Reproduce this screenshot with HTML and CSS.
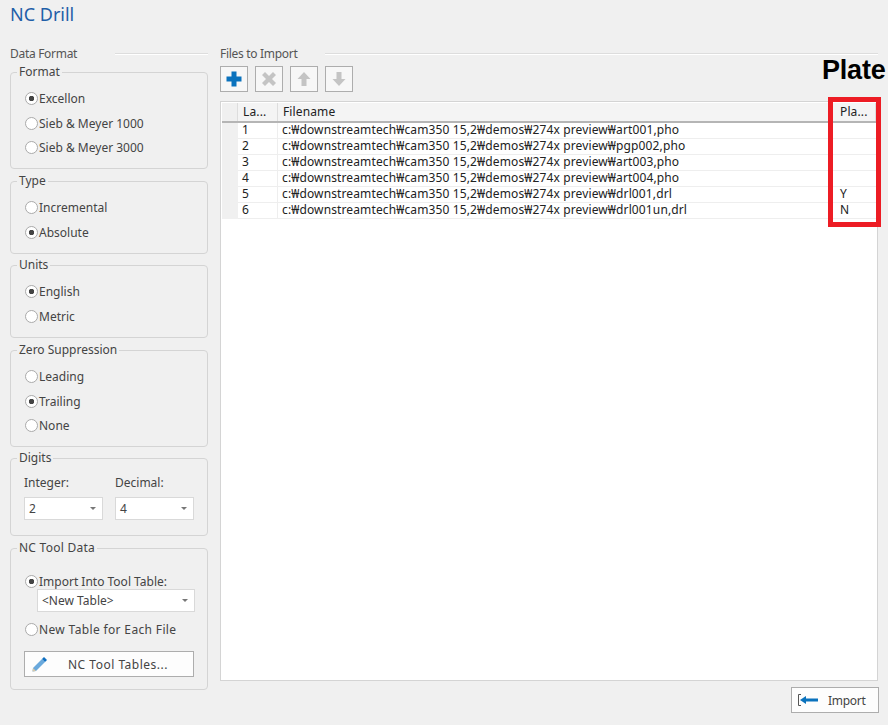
FILE: index.html
```html
<!DOCTYPE html>
<html lang="ko">
<head>
    <meta charset="UTF-8">
    <title>NC Drill</title>
    <link rel="stylesheet" href="styles.css">
</head>
<body>
    <div class="dialog">
        <h1>NC Drill</h1>

        <div class="main">
            <div class="left">
                <div class="section-title section-format"><span>Data Format</span><i></i></div>

                <div class="group group-three">
                    <span class="legend">Format</span>
                    <label class="radio on">Excellon</label>
                    <label class="radio">Sieb &amp; Meyer 1000</label>
                    <label class="radio">Sieb &amp; Meyer 3000</label>
                </div>

                <div class="group group-two group-tight">
                    <span class="legend">Type</span>
                    <label class="radio">Incremental</label>
                    <label class="radio on">Absolute</label>
                </div>

                <div class="group group-two">
                    <span class="legend">Units</span>
                    <label class="radio on">English</label>
                    <label class="radio">Metric</label>
                </div>

                <div class="group group-three group-tight">
                    <span class="legend">Zero Suppression</span>
                    <label class="radio">Leading</label>
                    <label class="radio on">Trailing</label>
                    <label class="radio">None</label>
                </div>

                <div class="group group-digits">
                    <span class="legend">Digits</span>
                    <div class="digits">
                        <div class="digit">
                            <div class="digit-label">Integer:</div>
                            <div class="combo">2<b></b></div>
                        </div>
                        <div class="digit">
                            <div class="digit-label">Decimal:</div>
                            <div class="combo">4<b></b></div>
                        </div>
                    </div>
                </div>

                <div class="group group-tool">
                    <span class="legend legend-wide">NC Tool Data</span>
                    <label class="radio radio-import on">Import Into Tool Table:</label>
                    <div class="combo combo-table">&lt;New Table&gt;<b></b></div>
                    <label class="radio radio-new">New Table for Each File</label>
                    <button class="btn btn-tables">
                        <svg width="18" height="18" viewBox="0 0 18 18">
                            <path d="M2 13 L11 4 L14 7 L5 16 L1.5 16.5 Z" fill="#6aa9dc"/>
                            <path d="M11 4 L13 2 L16 5 L14 7 Z" fill="#0f6fc0"/>
                            <path d="M2 13 L5 16 L1.5 16.5 Z" fill="#d8c8a8"/>
                        </svg>
                        <span>NC Tool Tables...</span>
                    </button>
                </div>
            </div>

            <div class="right">
                <div class="section-title section-files"><span>Files to Import</span><i></i></div>

                <div class="toolbar">
                    <button class="tool">
                        <svg width="16" height="16" viewBox="0 0 16 16"><path d="M5.500 0.500h5v5h5v5h-5v5h-5v-5h-5v-5h5z" fill="#0a72bd"/></svg>
                    </button>
                    <button class="tool">
                        <svg width="16" height="16" viewBox="0 0 16 16"><path d="M1 4l3-3 4 4 4-4 3 3-4 4 4 4-3 3-4-4-4 4-3-3 4-4z" fill="#c4c4c4"/></svg>
                    </button>
                    <button class="tool">
                        <svg width="16" height="16" viewBox="0 0 16 16"><path d="M8 1l6.500 7h-4v7h-5v-7h-4z" fill="#c4c4c4"/></svg>
                    </button>
                    <button class="tool">
                        <svg width="16" height="16" viewBox="0 0 16 16"><path d="M8 15l6.500-7h-4v-7h-5v7h-4z" fill="#c4c4c4"/></svg>
                    </button>
                </div>

                <div class="grid">
                    <div class="row head">
                        <div class="cell mark"></div>
                        <div class="cell layer">La...</div>
                        <div class="cell name">Filename</div>
                        <div class="cell plate">Pla...</div>
                    </div>
                    <div class="row">
                        <div class="cell mark"></div>
                        <div class="cell layer">1</div>
                        <div class="cell name">c:₩downstreamtech₩cam350 15,2₩demos₩274x preview₩art001,pho</div>
                        <div class="cell plate"></div>
                    </div>
                    <div class="row">
                        <div class="cell mark"></div>
                        <div class="cell layer">2</div>
                        <div class="cell name">c:₩downstreamtech₩cam350 15,2₩demos₩274x preview₩pgp002,pho</div>
                        <div class="cell plate"></div>
                    </div>
                    <div class="row">
                        <div class="cell mark"></div>
                        <div class="cell layer">3</div>
                        <div class="cell name">c:₩downstreamtech₩cam350 15,2₩demos₩274x preview₩art003,pho</div>
                        <div class="cell plate"></div>
                    </div>
                    <div class="row">
                        <div class="cell mark"></div>
                        <div class="cell layer">4</div>
                        <div class="cell name">c:₩downstreamtech₩cam350 15,2₩demos₩274x preview₩art004,pho</div>
                        <div class="cell plate"></div>
                    </div>
                    <div class="row">
                        <div class="cell mark"></div>
                        <div class="cell layer">5</div>
                        <div class="cell name">c:₩downstreamtech₩cam350 15,2₩demos₩274x preview₩drl001,drl</div>
                        <div class="cell plate">Y</div>
                    </div>
                    <div class="row">
                        <div class="cell mark"></div>
                        <div class="cell layer">6</div>
                        <div class="cell name">c:₩downstreamtech₩cam350 15,2₩demos₩274x preview₩drl001un,drl</div>
                        <div class="cell plate">N</div>
                    </div>
                </div>

                <div class="footer">
                    <button class="btn btn-import">
                        <svg width="32" height="14" viewBox="0 0 32 14">
                            <path d="M4 1.500H1.500V12.500H4" fill="none" stroke="#555" stroke-width="1"/>
                            <path d="M3 7l6-4v2.500h12v3H9V11z" fill="#0a72bd"/>
                        </svg>
                        <span>Import</span>
                    </button>
                </div>
            </div>
        </div>

        <div class="note">Plate</div>
        <div class="highlight"></div>
    </div>
</body>
</html>
```

FILE: styles.css
```css
* {
    box-sizing: border-box;
}
body {
    margin: 0;
    background-color: #f0f0f0;
    font-family: "Noto Sans", "Noto Sans CJK KR", sans-serif;
    font-size: 12px;
    color: #333;
}
.dialog {
    position: relative;
    width: 888px;
    height: 725px;
    padding: 4px 10px 0;
    overflow: hidden;
}
h1 {
    margin: 0;
    height: 39px;
    font-size: 18px;
    line-height: 21px;
    font-weight: normal;
    color: #1f5fa8;
}
.main {
    display: flex;
    gap: 12px;
}
.left {
    width: 198px;
}
.right {
    flex: 1;
}
.section-title {
    display: flex;
    align-items: center;
    height: 20px;
    color: #555;
    letter-spacing: -0.3px;
}
.section-title i {
    flex: 1;
    height: 1px;
    margin-left: 38px;
    background-color: #ddd;
    box-shadow: 0 1px 0 #fff;
}
.section-format {
    margin-bottom: 9px;
}
.section-files i {
    margin-left: 27px;
}

/* grupos da esquerda */
.group {
    position: relative;
    margin-bottom: 12px;
    padding: 13.500px 0 0 14px;
    border: 1px solid #d4d4d4;
    border-radius: 4px;
}
.group-tight {
    margin-bottom: 11px;
}
.legend {
    position: absolute;
    left: 6px;
    top: -9px;
    padding: 0 2px;
    line-height: 16px;
    color: #444;
    background-color: #f0f0f0;
}
.legend-wide {
    letter-spacing: 0.25px;
}
.group-three {
    height: 97px;
}
.group-two {
    height: 73px;
}
.group-digits {
    height: 78px;
    padding: 12px 0 0 13px;
}
.group-tool {
    height: 142px;
    padding-top: 22px;
}
.radio {
    display: flex;
    align-items: center;
    height: 24.500px;
    color: #444;
}
.radio::before {
    content: "";
    flex: none;
    width: 11px;
    height: 11px;
    margin-right: 1px;
    border: 1px solid #aaa;
    border-radius: 50%;
    background-color: #fff;
}
.radio.on::before {
    background: radial-gradient(circle, #444 0 2.500px, #fff 3px);
}
.radio-import {
    height: 20px;
}
.radio-new {
    height: 24px;
    margin-top: 5px;
    letter-spacing: 0.35px;
}
.digits {
    display: flex;
    gap: 12px;
}
.digit-label {
    height: 26px;
    line-height: 24px;
    color: #444;
}
.combo {
    position: relative;
    width: 79px;
    height: 23px;
    padding-left: 4px;
    line-height: 22px;
    border: 1px solid #d9d9d9;
    background-color: #fff;
    color: #444;
}
.combo b {
    position: absolute;
    right: 6px;
    top: 9px;
    border-left: 3px solid transparent;
    border-right: 3px solid transparent;
    border-top: 3px solid #777;
}
.combo-table {
    width: 158px;
    margin: -2px 0 0 12px;
}
.btn {
    display: flex;
    align-items: center;
    padding: 0;
    background-color: #fdfdfd;
    border: 1px solid #adadad;
    font-family: inherit;
    font-size: 12px;
    color: #444;
}
.btn-tables {
    width: 170px;
    height: 26px;
    margin: 10px 0 0 -1px;
    padding-left: 6px;
    letter-spacing: 0.5px;
}
.btn-tables span {
    margin-left: 19px;
}
.btn-import {
    width: 88px;
    height: 26px;
    margin-right: -1px;
    padding-left: 5px;
    letter-spacing: -0.3px;
}
.btn-import span {
    margin-left: -1px;
}

/* lista de arquivos */
.toolbar {
    display: flex;
    gap: 7px;
    height: 26px;
    margin-top: 3px;
}
.tool {
    display: flex;
    align-items: center;
    justify-content: center;
    width: 28px;
    height: 26px;
    padding: 0;
    background-color: #f7f7f7;
    border: 1px solid #adadad;
}
.grid {
    height: 580px;
    margin-top: 9px;
    padding: 1px;
    background-color: #fff;
    border: 1px solid #d4d4d4;
}
.row {
    display: flex;
    height: 16px;
    line-height: 14px;
    color: #222;
    letter-spacing: 0.13px;
}
.row.head {
    height: 20px;
    line-height: 18px;
    background-color: #f4f4f4;
    border-bottom: 2px solid #b5b5b5;
}
.cell {
    padding-left: 4px;
    border-right: 1px solid #eee;
    border-bottom: 1px solid #eee;
    white-space: nowrap;
}
.head .cell {
    border-bottom: 0;
    border-right: 1px solid #ddd;
}
.mark {
    width: 16px;
    padding: 0;
    background-color: #f0f0f0;
    border: 0;
}
.layer {
    width: 40px;
}
.head .layer {
    padding-left: 5px;
}
.name {
    flex: 1;
}
.head .name {
    padding-left: 5px;
}
.plate {
    width: 44px;
    padding-left: 8px;
    border-right: 0;
}
.footer {
    display: flex;
    justify-content: flex-end;
    margin-top: 6px;
}

/* anotacao sobre o print */
.note {
    position: absolute;
    left: 822px;
    top: 53px;
    font-family: "Liberation Sans", sans-serif;
    font-size: 27px;
    line-height: 34px;
    font-weight: bold;
    letter-spacing: -0.2px;
    color: #000;
}
.highlight {
    position: absolute;
    left: 828px;
    top: 97px;
    width: 53px;
    height: 130px;
    border: 5px solid #ed1c24;
}
```
